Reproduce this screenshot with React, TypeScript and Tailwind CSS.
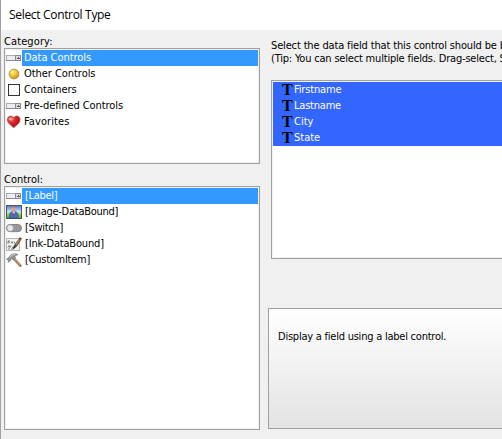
import type { ReactNode } from "react";

function FieldIcon() {
  return (
    <svg width="16" height="16" viewBox="0 0 16 16" shapeRendering="crispEdges">
      <rect x="0.5" y="5.5" width="14" height="5" fill="#eeeef2" stroke="#aaa9b5" />
      <path d="M0 10.5H15" stroke="#8d8a98" />
      <rect x="9" y="5" width="6" height="6" fill="#8d8a97" />
      <rect x="10" y="6" width="4" height="4" fill="#dddbe0" />
      <path d="M11 8h3v1h-3zM12 7h1v1h-1z" fill="#5f5b69" />
    </svg>
  );
}

function BallIcon() {
  return (
    <svg width="16" height="16" viewBox="0 0 16 16">
      <defs>
        <radialGradient id="ball" cx=".35" cy=".3" r=".75">
          <stop offset="0" stopColor="#fff3a8" />
          <stop offset=".45" stopColor="#f0cb38" />
          <stop offset="1" stopColor="#c98d0e" />
        </radialGradient>
      </defs>
      <circle cx="8" cy="8" r="4.9" fill="url(#ball)" stroke="#a9873c" strokeWidth=".8" />
    </svg>
  );
}

function SquareIcon() {
  return (
    <svg width="16" height="16" viewBox="0 0 16 16" shapeRendering="crispEdges">
      <rect x="2.5" y="2.5" width="11" height="11" fill="#fff" stroke="#333" />
    </svg>
  );
}

function HeartIcon() {
  return (
    <svg width="16" height="16" viewBox="0 0 16 16">
      <defs>
        <radialGradient id="heart" cx=".3" cy=".25" r=".8">
          <stop offset="0" stopColor="#ff8a80" />
          <stop offset=".4" stopColor="#dd2626" />
          <stop offset="1" stopColor="#a50d12" />
        </radialGradient>
      </defs>
      <path d="M7.7 13.7C4.4 10.9 1.4 8.9 1.4 5.6c0-3.7 4.4-4.7 6.3-1.8 1.9-2.9 6.3-1.9 6.3 1.8 0 3.300-3 5.300-6.300 8.100z" fill="url(#heart)" stroke="#a93a3a" strokeWidth=".7" />
      <ellipse cx="4.600" cy="4.900" rx="1.700" ry="1.200" fill="#ffc4bd" opacity=".75" />
    </svg>
  );
}

function ImageIcon() {
  return (
    <svg width="16" height="16" viewBox="0 0 16 16">
      <defs>
        <linearGradient id="sky" x1="0" y1="0" x2="0" y2="1">
          <stop offset="0" stopColor="#4a76d4" />
          <stop offset=".5" stopColor="#cde8f8" />
          <stop offset=".6" stopColor="#a5dc72" />
          <stop offset="1" stopColor="#4aa52c" />
        </linearGradient>
      </defs>
      <rect x=".5" y="1.500" width="15" height="13" fill="url(#sky)" stroke="#4c5558" />
      <path d="M3.500 14V10.500Q4 8.500 5.500 7.800h4.300Q11.500 8.500 12 10.500V14z" fill="#476fbd" stroke="#2c4b89" strokeWidth=".6" />
      <path d="M6.200 7.800h3l-1.500 3z" fill="#e9eefb" />
      <path d="M7.300 8.800h.8l.4 3h-1.600z" fill="#b8433c" />
      <ellipse cx="7.600" cy="5" rx="2.100" ry="2.800" fill="#d9a284" />
      <path d="M5.500 4.300C5.500 1.400 9.900 1.400 9.800 4.300L8.700 3.300H6.600z" fill="#a06a4c" />
    </svg>
  );
}

function SwitchIcon() {
  return (
    <svg width="16" height="16" viewBox="0 0 16 16">
      <rect x=".5" y="4.500" width="15" height="7.200" rx="3.600" fill="#98989e" stroke="#707076" strokeWidth=".8" />
      <circle cx="4.200" cy="8.100" r="3.400" fill="#e8e8ee" stroke="#808087" strokeWidth=".6" />
    </svg>
  );
}

function InkIcon() {
  return (
    <svg width="16" height="16" viewBox="0 0 16 16">
      <rect x=".5" y="2.500" width="13" height="12" fill="#f3f3f1" stroke="#b5b5b3" />
      <path d="M2 7.500V5h2M2 6.200h2M5 7.500l1-2 1 2M8 5.500l1 2M2 11.500l1-2 1 2 1-2M6 11.500h1M2 13h2M5 13h2" fill="none" stroke="#666" strokeWidth=".8" />
      <path d="M6.700 13.400L8 9.300 12.600 3l2.300 1.500-4.500 6.500z" fill="#514b45" />
      <path d="M9.900 8.800L13.400 3.900" stroke="#c99552" strokeWidth="1.200" />
      <path d="M12.600 3l1.200-1.900 2.100 1.400-1 2z" fill="#87463d" />
      <path d="M6.700 13.400l1-3 1.500 1z" fill="#222" />
    </svg>
  );
}

function HammerIcon() {
  return (
    <svg width="16" height="16" viewBox="0 0 16 16">
      <path d="M8 6.700L14.300 13.600" stroke="#9b7048" strokeWidth="2.600" strokeLinecap="round" />
      <path d="M8.300 6.600l6 6.500" stroke="#dcb986" strokeWidth="1" />
      <path d="M.5 7.200L2.800 5.300 4.500 3.200Q6.500 1.200 11 1.900L11.500 3.100 8.700 3.600 9.400 5.800 7.200 7.700 5.300 6.200 4.600 8.500 2.200 10.200 2.400 7.900z" fill="#8f9596" stroke="#656b6c" strokeWidth=".6" />
      <path d="M3.300 5.900L5.300 3.700Q7 2.500 9 2.500" fill="none" stroke="#d0d4d4" strokeWidth=".9" />
    </svg>
  );
}

interface Item {
  label: string;
  icon?: ReactNode;
  spacing: string;
}

const categories: Item[] = [
  { label: "Data Controls", icon: <FieldIcon />, spacing: "tracking-[-0.04px]" },
  { label: "Other Controls", icon: <BallIcon />, spacing: "tracking-[-0.05px]" },
  { label: "Containers", icon: <SquareIcon />, spacing: "tracking-[-0.1px]" },
  { label: "Pre-defined Controls", icon: <FieldIcon />, spacing: "tracking-[-0.08px]" },
  { label: "Favorites", icon: <HeartIcon />, spacing: "tracking-[0.1px]" },
];

const controls: Item[] = [
  { label: "[Label]", icon: <FieldIcon />, spacing: "tracking-[-0.32px]" },
  { label: "[Image-DataBound]", icon: <ImageIcon />, spacing: "tracking-[-0.26px]" },
  { label: "[Switch]", icon: <SwitchIcon />, spacing: "tracking-[-0.3px]" },
  { label: "[Ink-DataBound]", icon: <InkIcon />, spacing: "tracking-[-0.18px]" },
  { label: "[CustomItem]", icon: <HammerIcon />, spacing: "tracking-[-0.26px]" },
];

const fields: Item[] = [
  { label: "Firstname", spacing: "tracking-[-0.15px]" },
  { label: "Lastname", spacing: "tracking-[-0.22px]" },
  { label: "City", spacing: "tracking-normal" },
  { label: "State", spacing: "tracking-normal" },
];

function ItemList({ items, indent, className }: { items: Item[]; indent: string; className: string }) {
  return (
    <div className={`border border-[#a0a0a0] bg-white p-px shadow-[inset_0_0_0_1px_#f0f0f0] ${className}`}>
      {items.map((item, i) => (
        <div key={item.label} className="flex h-4">
          <div className="h-4 w-4 shrink-0">{item.icon}</div>
          <div className={`h-4 flex-1 whitespace-nowrap leading-4 ${indent} ${i === 0 ? "bg-[#3399ff] text-white" : ""}`}>
            <span className={item.spacing}>{item.label}</span>
          </div>
        </div>
      ))}
    </div>
  );
}

export default function App() {
  return (
    <div className="flex h-[439px] w-[502px] flex-col overflow-hidden border-l border-[#a0a0a0] bg-[#f0f0f0] font-['DejaVu_Sans_Condensed','DejaVu_Sans',sans-serif] text-[11px] text-black">
      <div className="h-[30px] shrink-0 bg-white pl-2 font-['Open_Sans',sans-serif] text-xs leading-[30px] tracking-[-0.32px]">Select Control Type</div>
      <div className="flex flex-1">
        <div className="ml-[3px] w-64 shrink-0">
          <div className="h-[18px] pt-[4px] leading-4 tracking-[0.1px]">Category:</div>
          <ItemList items={categories} indent="pl-[2px]" className="h-[116px]" />
          <div className="h-[22px] pt-[8px] leading-4">Control:</div>
          <ItemList items={controls} indent="pl-[3px]" className="h-[244px]" />
        </div>
        <div className="ml-2 flex-1 overflow-hidden">
          <div className="ml-[3px] h-[50px] whitespace-nowrap pt-[9px] leading-[13px]">
            <div className="tracking-[-0.15px]">Select the data field that this control should be bound to.</div>
            <div className="tracking-[-0.19px]">(Tip: You can select multiple fields. Drag-select, Shift-click</div>
          </div>
          <div className="ml-[3px] h-[179px] w-[300px] border border-[#a0a0a0] bg-white p-px shadow-[inset_0_0_0_1px_#f0f0f0]">
            {fields.map((field) => (
              <div key={field.label} className="flex h-4 bg-[#3366ff] pl-[9px] leading-4 text-white">
                <span className="w-3 shrink-0 font-['Liberation_Serif',serif] text-base leading-4 font-bold text-black">T</span>
                <span className={field.spacing}>{field.label}</span>
              </div>
            ))}
          </div>
          <div className="mt-[49px] h-[121px] w-[300px] whitespace-nowrap border border-[#a0a0a0] bg-linear-to-b from-white to-[#e3e3e3] pt-[20px] pl-[9px] leading-4 tracking-[-0.23px]">
            Display a field using a label control.
          </div>
        </div>
      </div>
    </div>
  );
}
